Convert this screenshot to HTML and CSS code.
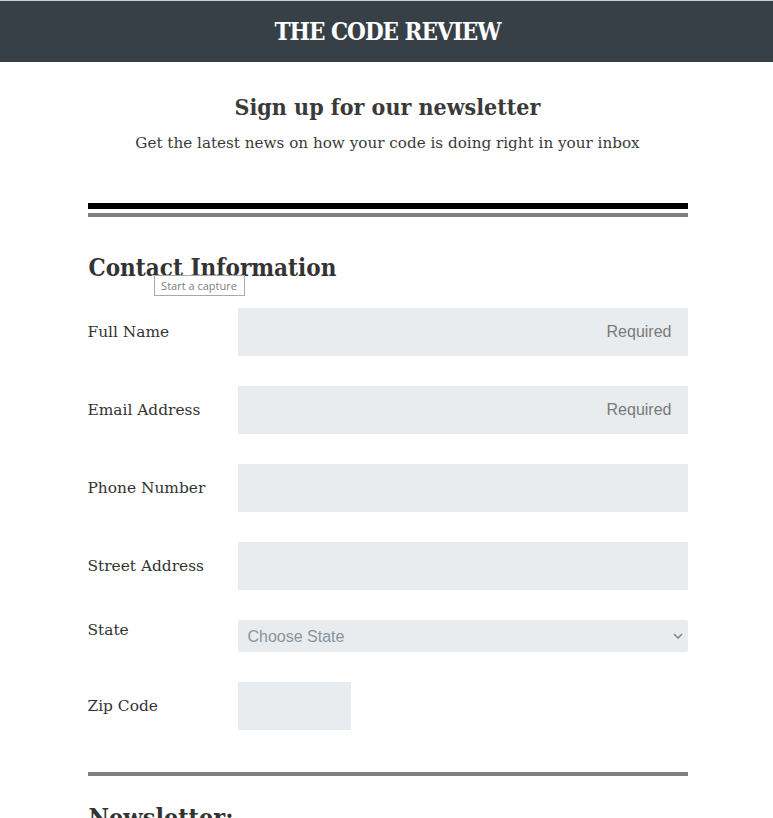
FILE: index.html
```html
<!DOCTYPE html>
<html lang="en">
<head>
<meta charset="utf-8">
<title>The Code Review</title>
<link rel="stylesheet" href="styles.css">
</head>
<body>
<header class="site-header">
  <h1 class="site-title">THE CODE REVIEW</h1>
</header>
<main class="container">
  <section class="intro">
    <h2 class="intro-title">Sign up for our newsletter</h2>
    <p class="intro-text">Get the latest news on how your code is doing right in your inbox</p>
  </section>
  <div class="rule-double"><span class="rule-black"></span><span class="rule-gray"></span></div>
  <form class="form">
    <section class="fieldset">
      <div class="heading-wrap">
        <h2 class="section-title">Contact Information</h2>
        <span class="tooltip">Start a capture</span>
      </div>
      <div class="row">
        <label class="label" for="name">Full Name</label>
        <input class="field" id="name" type="text" placeholder="Required">
      </div>
      <div class="row">
        <label class="label" for="email">Email Address</label>
        <input class="field" id="email" type="email" placeholder="Required">
      </div>
      <div class="row">
        <label class="label" for="phone">Phone Number</label>
        <input class="field" id="phone" type="tel">
      </div>
      <div class="row">
        <label class="label" for="street">Street Address</label>
        <input class="field" id="street" type="text">
      </div>
      <div class="row row-top">
        <label class="label label-top" for="state">State</label>
        <select class="select" id="state">
          <option>Choose State</option>
        </select>
      </div>
      <div class="row">
        <label class="label" for="zip">Zip Code</label>
        <input class="field field-zip" id="zip" type="text">
      </div>
    </section>
    <div class="rule-single"></div>
    <section class="fieldset">
      <h2 class="section-title section-title-next">Newsletter:</h2>
    </section>
  </form>
</main>
</body>
</html>
```
FILE: styles.css
```css
* { box-sizing: border-box; }
html, body { margin: 0; padding: 0; background: #fff; }
body {
  font-family: "DejaVu Serif", "Liberation Serif", serif;
  color: #3a3a3a;
  overflow: hidden;
}
.site-header {
  border-top: 1px solid #c9cccf;
  background: #373f47;
  height: 62px;
  display: flex;
  align-items: center;
  justify-content: center;
}
.site-title {
  margin: 0;
  color: #fff;
  font-family: "DejaVu Serif", serif;
  font-stretch: condensed;
  font-weight: 700;
  font-size: 24px;
  letter-spacing: -1px;
  padding-left: 2px;
}
.container {
  width: 600px;
  margin: 0 auto;
  position: relative;
  left: 1px;
}
.intro { text-align: center; padding-top: 30px; }
.intro-title {
  margin: 0;
  font-size: 23px;
  font-weight: 700;
  font-stretch: condensed;
  line-height: 30px;
  color: #3a3a3a;
}
.intro-text {
  margin: 9px 0 0;
  font-size: 15.2px;
  line-height: 24px;
  color: #3a3a3a;
}
.rule-double { margin-top: 48px; display: flex; flex-direction: column; gap: 4px; }
.rule-black { display: block; height: 6px; background: #000; }
.rule-gray { display: block; height: 4px; background: #808080; }
.fieldset { padding: 0; }
.heading-wrap { position: relative; padding-top: 36px; margin-bottom: 25px; }
.section-title {
  margin: 0;
  font-size: 24px;
  font-weight: 700;
  font-stretch: condensed;
  line-height: 30px;
  color: #333;
  padding-left: 1px;
}
.tooltip {
  position: absolute;
  left: 66px;
  top: 58px;
  width: 91px;
  height: 21px;
  border: 1px solid #a9a9a9;
  background: rgba(255,255,255,0.82);
  color: #7d7d7d;
  font-family: "Open Sans", "Liberation Sans", sans-serif;
  font-size: 11px;
  line-height: 19px;
  text-align: center;
}
.row {
  display: grid;
  grid-template-columns: 150px 1fr;
  align-items: center;
  margin-bottom: 30px;
}
.row-top { align-items: start; }
.label {
  font-size: 15.4px;
  color: #333;
  line-height: 20px;
}
.label-top { padding-top: 0; }
.field {
  height: 48px;
  border: none;
  background: #e8ecee;
  width: 100%;
  padding: 0 16px;
  text-align: right;
  font-family: "Liberation Sans", Arial, sans-serif;
  font-size: 16px;
  color: #333;
  outline: none;
}
.field::placeholder { color: #7a7a7a; }
.field-zip { width: 113px; }
.select {
  height: 32px;
  width: 100%;
  border: none;
  border-radius: 2px;
  background: #e8ecee url("data:image/svg+xml;utf8,<svg xmlns='http://www.w3.org/2000/svg' width='10' height='6' viewBox='0 0 10 6'><path d='M1 1l4 4 4-4' fill='none' stroke='%23808890' stroke-width='1.6'/></svg>") no-repeat right 5px center;
  appearance: none;
  -webkit-appearance: none;
  padding: 0 10px;
  font-family: "Liberation Sans", Arial, sans-serif;
  font-size: 16px;
  color: #8a939b;
}
.rule-single { height: 4px; background: #808080; margin-top: 42px; }
.section-title-next { padding-top: 27px; font-size: 25px; }
```
